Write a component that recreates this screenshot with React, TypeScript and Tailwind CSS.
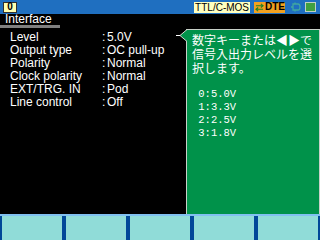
import React from "react";

const rows: [string, string][] = [
  ["Level", "5.0V"],
  ["Output type", "OC pull-up"],
  ["Polarity", "Normal"],
  ["Clock polarity", "Normal"],
  ["EXT/TRG. IN", "Pod"],
  ["Line control", "Off"],
];

export default function App() {
  return (
    <div
      className="w-[320px] h-[240px] bg-black flex flex-col overflow-hidden text-white"
      style={{ fontFamily: '"Liberation Sans", Arial, sans-serif' }}
    >
      {/* header */}
      <div className="h-[14px] bg-[#1f6fc0] flex items-center pl-[3px] pr-[4px]">
        <div className="w-[14px] h-[11px] bg-[#ffffb0] border border-[#303030] flex items-center justify-center text-black text-[10px] font-bold leading-none">
          0
        </div>
        <div className="flex-1" />
        <div className="h-[11px] bg-[#ffffc0] text-black text-[10px] leading-[11px] px-[1px] flex items-center">
          TTL/C-MOS
        </div>
        <div className="ml-[4px] h-[11px] w-[31px] bg-[#f0a020] flex items-center text-black text-[10px] font-bold leading-none">
          <svg width="10" height="9" viewBox="0 0 10 9" className="ml-[1px] mr-[1px]">
            <path d="M1 2.5 H9 M6.5 0.5 L9 2.5 L6.5 4.5" stroke="#208020" strokeWidth="1.2" fill="none" />
            <path d="M9 6.5 H1 M3.5 4.5 L1 6.5 L3.5 8.5" stroke="#208020" strokeWidth="1.2" fill="none" />
          </svg>
          DTE
        </div>
        <svg width="12" height="10" viewBox="0 0 12 10" className="ml-[5px]">
          <path d="M1 5 H3 M3 2 H8 Q10 2 10 5 Q10 8 8 8 H3 Z M5 2 V0.5 M5 8 V9.5" stroke="#40a8a0" strokeWidth="1.3" fill="none" />
        </svg>
        <div className="ml-[3px] w-[11px] h-[10px] bg-[#40a040] border border-[#c0d0c0]" />
      </div>

      {/* main */}
      <div className="flex-1 flex">
        <div className="w-[186px] flex flex-col">
          <div className="w-[60px] pl-[5px] text-[12px] leading-[11px] border-b-[3px] border-[#808080]">
            Interface
          </div>
          <div className="pl-[10px] pt-[3px] flex flex-col">
            {rows.map(([k, v]) => (
              <div key={k} className="flex text-[12px] leading-[13px]">
                <span className="w-[92px]">{k}</span>
                <span className="w-[5px]">:</span>
                <span>{v}</span>
              </div>
            ))}
          </div>
        </div>
        <div className="relative mt-[15px] w-[134px] bg-[#00924a] border-l border-t border-r border-[#c8d0c8] pl-[5px] pt-[3px]">
          <svg width="12" height="13" viewBox="0 0 12 13" className="absolute left-[-11px] top-[-1px]">
            <path d="M11 0.5 L4 6.5 L11 12.5 Z" fill="#00924a" />
            <path d="M11 0.5 L4 6.5 L11 12.5" stroke="#d0d8d0" strokeWidth="1" fill="none" />
            <path d="M0 6.5 H4" stroke="#ffffff" strokeWidth="1" />
          </svg>
          <div
            className="text-[12px] leading-[14px] text-white"
            style={{ fontFamily: '"Noto Sans CJK JP", sans-serif' }}
          >
            <div className="whitespace-nowrap">数字キーまたは◀▶で</div>
            <div className="whitespace-nowrap">信号入出力レベルを選</div>
            <div className="whitespace-nowrap">択します。</div>
          </div>
          <div
            className="mt-[13px] text-[10.5px] leading-[13px] text-white whitespace-pre"
            style={{ fontFamily: '"Liberation Mono", monospace' }}
          >
            <div> 0:5.0V</div>
            <div> 1:3.3V</div>
            <div> 2:2.5V</div>
            <div> 3:1.8V</div>
          </div>
        </div>
      </div>

      {/* footer */}
      <div className="h-[26px] border-t-[2px] border-[#80c0f0] bg-[#004898] flex gap-[4px] px-[2px]">
        {[0, 1, 2, 3, 4].map((i) => (
          <div key={i} className="flex-1 bg-[#90dcd8]" />
        ))}
      </div>
    </div>
  );
}
